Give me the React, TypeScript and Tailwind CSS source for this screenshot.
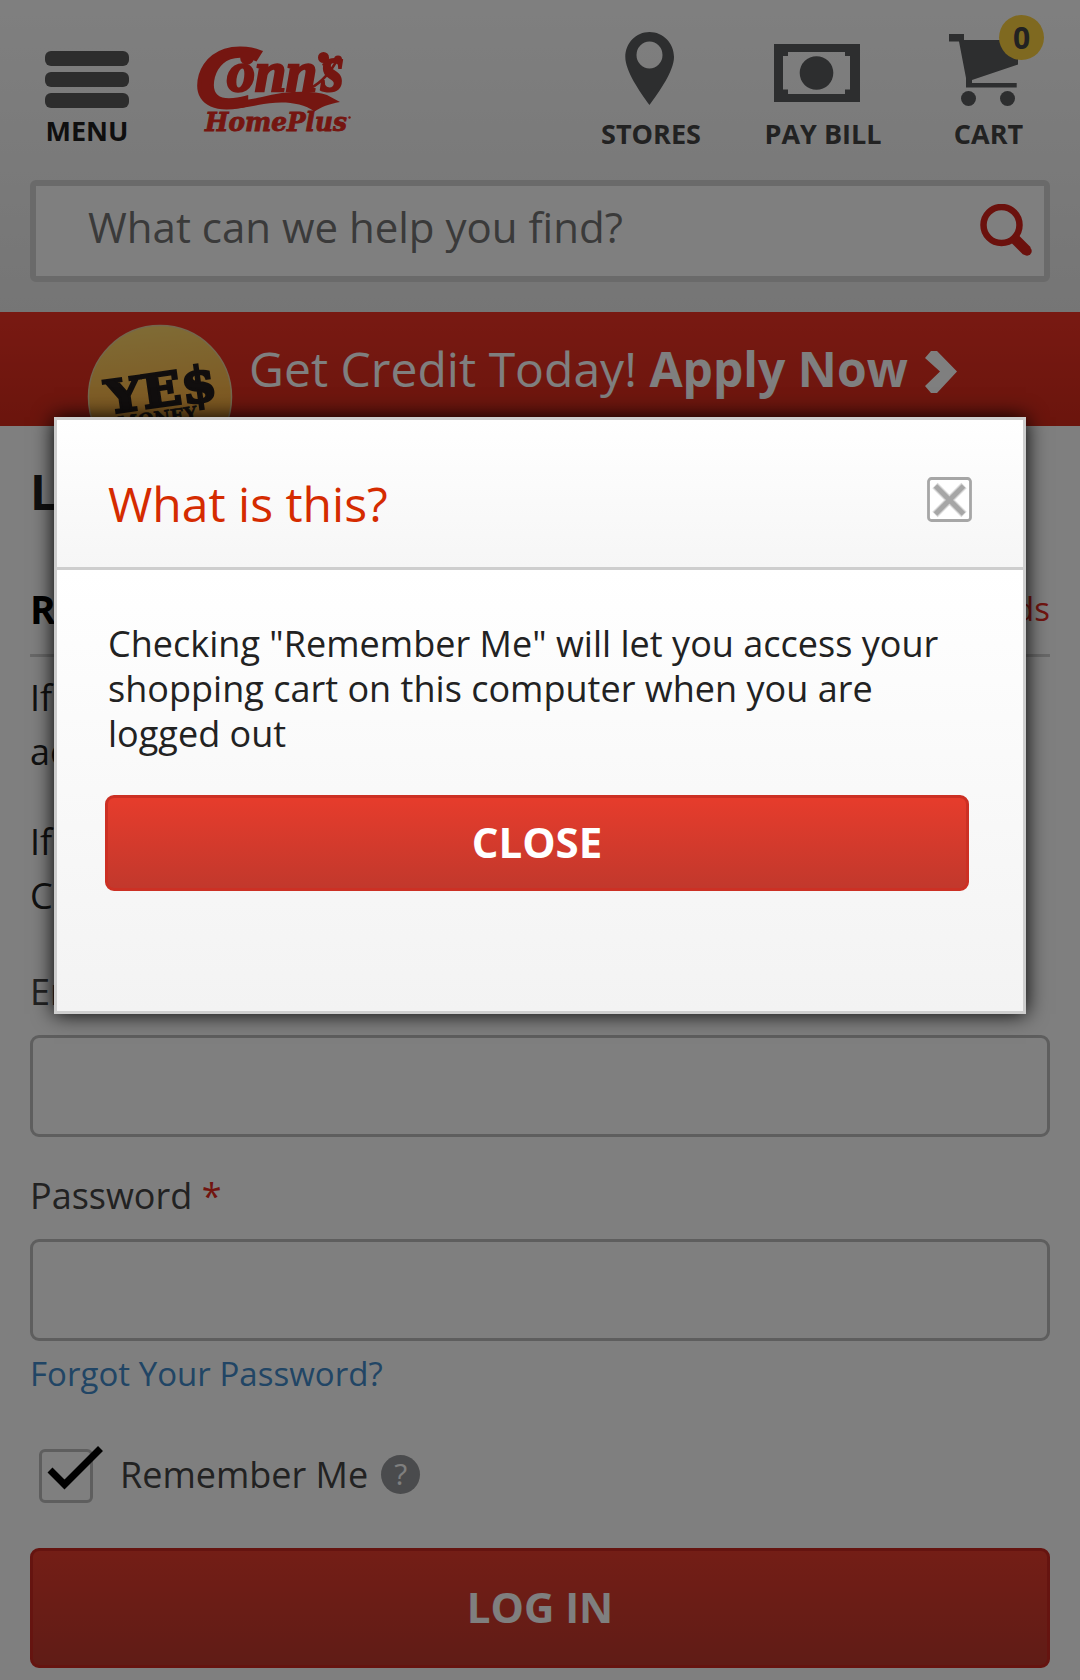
import React from "react";

function Logo() {
  return (
    <svg className="ml-[63px] h-[180px] w-[166px] shrink-0" viewBox="192 0 166 180" fill="#ea2d22">
      <text x="192" y="107" fontFamily="Open Sans" fontWeight="600" fontStyle="italic" fontSize="82" stroke="#ea2d22" strokeWidth="3" textLength="64" lengthAdjust="spacingAndGlyphs">C</text>
      <circle cx="247" cy="58" r="6.800" />
      <path d="M211 98 C219 103 240 102 262 97 C284 91 312 90 327 95 L340 102 C329 104 321 107 314.500 111.500 C300 101 278 101 258 105 C237 109.500 222 110 211 105Z" />
      <text x="227" y="91" fontFamily="Liberation Serif" fontWeight="700" fontStyle="italic" fontSize="56" stroke="#ea2d22" strokeWidth="2.500" textLength="90" lengthAdjust="spacingAndGlyphs">onn</text>
      <circle cx="323.500" cy="57.500" r="5.500" />
      <path d="M329 57 Q329 63 323 66 L322 64 Q326 62 325 58Z" />
      <path d="M306 90 Q323 84 336 62" fill="none" stroke="#ea2d22" strokeWidth="2.500" />
      <circle cx="338" cy="59.500" r="4" />
      <text x="321" y="90.500" fontFamily="Liberation Serif" fontWeight="700" fontStyle="italic" fontSize="68" stroke="#ea2d22" strokeWidth="2" textLength="23" lengthAdjust="spacingAndGlyphs">s</text>
      <text x="205" y="130.500" fontFamily="DejaVu Serif" fontWeight="700" fontStyle="italic" fontSize="25.500" stroke="#ea2d22" strokeWidth="0.900" textLength="142" lengthAdjust="spacingAndGlyphs">HomePlus</text>
      <circle cx="349.500" cy="117.500" r="1.200" />
    </svg>
  );
}

function Header() {
  return (
    <header className="h-[312px] bg-linear-to-b from-white to-[#ebebeb]">
      <div className="flex h-[180px]">
        <div className="ml-[45px] flex w-[84px] shrink-0 flex-col items-center pt-[51px]">
          <div className="flex w-full flex-col gap-[6px]">
            <div className="h-[15px] rounded-[6px] bg-[#5a5a5a]" />
            <div className="h-[15px] rounded-[6px] bg-[#5a5a5a]" />
            <div className="h-[15px] rounded-[6px] bg-[#5a5a5a]" />
          </div>
          <div className="mt-[9px] text-[27px] leading-[27px] font-bold text-[#1f1f1f]">MENU</div>
        </div>
        <Logo />
        <nav className="ml-[243px] flex text-[27px] leading-[27px] font-bold whitespace-nowrap text-[#444]">
          <div className="flex w-[100px] flex-col items-center">
            <svg className="h-[120px] w-[100px]" viewBox="601 0 100 120" fill="#5a5c5e">
              <path fillRule="evenodd" d="M649.500 32 C663 32 674 43 674 57 C674 71 659 92 649.500 105 C640 92 625.300 71 625.300 57 C625.300 43 636 32 649.500 32Z M649.500 41.500 A13 13.500 0 1 0 649.500 68.500 A13 13.500 0 1 0 649.500 41.500Z" />
            </svg>
            <div>STORES</div>
          </div>
          <div className="ml-[64px] flex w-[116px] flex-col items-center">
            <svg className="h-[120px] w-[116px]" viewBox="765 0 116 120" fill="#5a5c5e">
              <path fillRule="evenodd" d="M774 44H860V102H774Z M788 52V56H783V89.500H788V94H845V89.500H850V56H845V52Z" />
              <circle cx="816.500" cy="73" r="16.800" />
            </svg>
            <div>PAY BILL</div>
          </div>
          <div className="relative ml-[72px] flex w-[71px] flex-col items-center">
            <svg className="h-[120px] w-[71px] overflow-visible" viewBox="953 0 71 120" fill="#5a5c5e">
              <path d="M949 34H964V40H1018V64.500L972 80V83H1016.700V87.500H966V78L959 41.500H949Z" />
              <circle cx="968.500" cy="98.500" r="7.500" />
              <circle cx="1007.500" cy="98.500" r="7.500" />
            </svg>
            <div>CART</div>
            <div className="absolute top-[15px] left-[46px] flex h-[45px] w-[45px] items-center justify-center rounded-full bg-[#ffd240] text-[30px] leading-[45px]">0</div>
          </div>
        </nav>
      </div>
      <div className="mx-[30px] flex h-[102px] items-center justify-between rounded-[6px] border-[6px] border-[#d4d4d4] bg-white pr-[12px] pl-[52px]">
        <span className="-mt-[8px] text-[42px] leading-[60px] text-[#757575]">What can we help you find?</span>
        <svg className="-mt-[3px] h-[52px] w-[52px]" viewBox="980 203 52 52" fill="none" stroke="#d6231a">
          <circle cx="1001.500" cy="224" r="18" strokeWidth="6.500" />
          <path d="M1015 238L1027 250" strokeWidth="10.500" />
          <path d="M1026.500 249.500L1027 250" strokeWidth="9.500" strokeLinecap="round" />
        </svg>
      </div>
    </header>
  );
}

function Banner() {
  return (
    <div className="flex h-[114px] items-start overflow-hidden bg-linear-to-b from-[#f23325] to-[#d62a1a] pl-[87px] text-[48px] leading-[72px] whitespace-nowrap text-white">
      <svg className="mt-[12px] h-[146px] w-[146px] shrink-0" viewBox="87 324 146 146">
        <defs>
          <linearGradient id="coin" x1="0" y1="0" x2="0.100" y2="1">
            <stop offset="0" stopColor="#ffda6e" />
            <stop offset="0.650" stopColor="#fbb042" />
            <stop offset="1" stopColor="#f59a30" />
          </linearGradient>
        </defs>
        <circle cx="160" cy="397" r="71.500" fill="url(#coin)" stroke="#e8cf9a" strokeWidth="1.500" />
        <g transform="rotate(-8 160 400)" fill="#221c1c" fontFamily="DejaVu Serif" fontWeight="700">
          <text x="106.500" y="406.500" fontSize="46" stroke="#221c1c" strokeWidth="2.500" textLength="76" lengthAdjust="spacingAndGlyphs">YE</text>
          <text x="183" y="407.500" fontSize="49" stroke="#221c1c" strokeWidth="2.500" textLength="35" lengthAdjust="spacingAndGlyphs">$</text>
          <text x="115" y="424.500" fontSize="19" stroke="#221c1c" strokeWidth="0.600" textLength="80" lengthAdjust="spacingAndGlyphs">MONEY</text>
        </g>
      </svg>
      <span className="mt-[21px] ml-[16px] tracking-[0.03px]">Get Credit Today! <b>Apply Now</b></span>
      <svg className="mt-[39px] ml-[17px] h-[42px] w-[32px] shrink-0" viewBox="0 0 32 42" fill="white">
        <path d="M6 0H12L32 20.500L12 42H6L0 35L15 20.500L0 7Z" />
      </svg>
    </div>
  );
}

function LoginForm() {
  return (
    <main className="px-[30px] text-[36px] text-[#444]">
      <h1 className="pt-[42px] text-[48px] leading-[48px] font-bold text-[#202020]">Login</h1>
      <div className="mt-[59px] flex h-[82px] items-center justify-between border-b-[3px] border-[#d0d0d0]">
        <h2 className="-mt-[11px] text-[39px] leading-[54px] font-bold text-black">Registered Users</h2>
        <span className="-mt-[11px] text-[33px] leading-[54px] text-[#e42a20]">* Required Fields</span>
      </div>
      <div className="mt-[14px] leading-[54px] whitespace-nowrap text-[#222]">
        <p>If you have already created an<br />account, please log in here.</p>
        <p className="mt-[36px]">If you are a new customer at<br />Conn's, please register.</p>
      </div>
      <label className="mt-[42px] block leading-[54px]">Email <span className="text-[#e42a20]">*</span></label>
      <div className="mt-[16px] h-[102px] rounded-[9px] border-[3px] border-[#bcbcbc]" />
      <label className="mt-[32px] block leading-[54px]">Password <span className="text-[#e42a20]">*</span></label>
      <div className="mt-[16px] h-[102px] rounded-[9px] border-[3px] border-[#bcbcbc]" />
      <a className="mt-[6px] block text-[33px] leading-[54px] tracking-[0.03px] text-[#428bca]">Forgot Your Password?</a>
      <div className="mt-[48px] ml-[9px] flex h-[54px] items-center">
        <div className="relative h-[54px] w-[54px] rounded-[6px] border-[3px] border-[#bcbcbc]">
          <svg className="absolute -top-[9px] left-0 h-[60px] w-[66px]" viewBox="42 1443 66 60" fill="none" stroke="black" strokeWidth="7">
            <path d="M50 1470L64.500 1484.500L100.500 1448.500" />
          </svg>
        </div>
        <span className="-mt-[2px] ml-[27px] leading-[54px]">Remember Me</span>
        <span className="-mt-[4px] ml-[13px] flex h-[39px] w-[39px] items-center justify-center rounded-full bg-[#95979a] pb-[2px] text-[30px] leading-[37px] text-white">?</span>
      </div>
      <button className="mt-[45px] flex h-[120px] w-full items-center justify-center rounded-[9px] border-[3px] border-[#ca2820] bg-linear-to-b from-[#e83c2d] to-[#c0382c] pb-[2px] text-[42px] leading-[60px] font-bold text-white">
        LOG IN
      </button>
    </main>
  );
}

function Modal() {
  return (
    <div className="absolute top-[417px] left-[54px] flex h-[597px] w-[972px] flex-col border-[3px] border-[#cecece] shadow-[0_0_20px_#000]">
      <div className="flex h-[150px] items-start justify-between border-b-[3px] border-[#cecece] bg-linear-to-b from-white to-[#f6f6f6] pr-[51px] pl-[51px]">
        <h3 className="mt-[48px] text-[48px] leading-[72px] text-[#d52b00]">What is this?</h3>
        <svg className="mt-[57px] h-[45px] w-[45px]" viewBox="0 0 45 45" fill="white" stroke="#a6a6a6">
          <rect x="1.500" y="1.500" width="42" height="42" rx="3" strokeWidth="2.800" />
          <path d="M8 8.500L37 37.500M37 8.500L8 37.500" stroke="#d8d8d8" strokeWidth="7.500" />
          <path d="M8.500 9L36.500 37M36.500 9L8.500 37" strokeWidth="5" />
        </svg>
      </div>
      <div className="flex-1 bg-linear-to-b from-white to-[#f3f3f3] pt-[51px] pl-[48px]">
        <p className="pl-[3px] text-[36px] leading-[45px] tracking-[0.02px] whitespace-nowrap text-[#222]">
          Checking "Remember Me" will let you access your<br />
          shopping cart on this computer when you are<br />
          logged out
        </p>
        <button className="mt-[39px] flex h-[96px] w-[864px] items-center justify-center rounded-[9px] border-[3px] border-[#cc3024] bg-linear-to-b from-[#e63c2c] to-[#c2382c] pb-[2px] text-[42px] leading-[60px] font-bold text-white">
          CLOSE
        </button>
      </div>
    </div>
  );
}

export default function App() {
  return (
    <div className="relative h-[1680px] w-[1080px] overflow-hidden bg-white font-['Open_Sans',sans-serif] [font-variant-ligatures:none]">
      <Header />
      <Banner />
      <LoginForm />
      <div className="absolute inset-0 bg-black/50" />
      <Modal />
    </div>
  );
}
